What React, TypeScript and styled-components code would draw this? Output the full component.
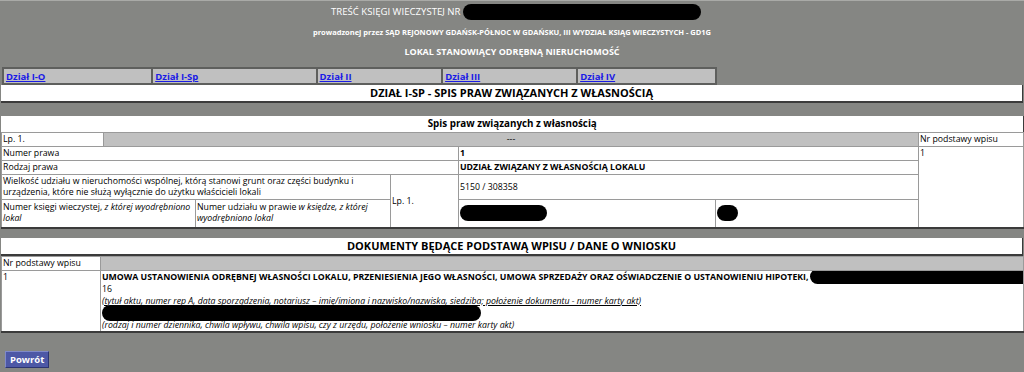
import React from 'react'
import styled, { createGlobalStyle } from 'styled-components'

const GlobalStyle = createGlobalStyle`
    html, body {
        margin: 0;
        padding: 0;
        background: #858683;
        font-family: "Open Sans", "Noto Sans", sans-serif;
    }
    body {
        border-top: 1px solid #a9aaa7;
    }
`

const Page = styled.div`
    width: 1024px;
    height: 371px;
    overflow: hidden;
    color: #000;
`

const Header = styled.div`
    padding-top: 1px;
    text-align: center;
    color: #fff;
`

const HeaderLine = styled.div<{ size: number, bold?: boolean, shift?: number }>`
    height: 20px;
    line-height: 16px;
    padding-left: ${({ shift }) => shift || 0}px;
    font-size: ${({ size }) => size}px;
    font-weight: ${({ bold }) => (bold ? 700 : 400)};
    display: flex;
    justify-content: center;
    align-items: center;
`

const Redacted = styled.span<{ w: number, h?: number }>`
    display: inline-block;
    width: ${({ w }) => w}px;
    height: ${({ h }) => h || 16}px;
    border-radius: 8px;
    background: #000;
    vertical-align: middle;
`

const InlineRedacted = styled(Redacted)`
    margin: -3px 0 -2px 1px;
`

const NavTable = styled.table`
    margin: 5px 0 0 2px;
    width: 715px;
    border-collapse: collapse;
    border: 2px solid #5e5f5d;
    td {
        background: #c0c0c0;
        border: 2px solid #5e5f5d;
        height: 14px;
        padding: 0 2px;
        font-size: 9.5px;
        font-weight: 700;
    }
    a {
        color: #1a1ae6;
        text-decoration: underline;
    }
`

const SectionTitle = styled.div<{ top: number }>`
    margin: ${({ top }) => top}px 1px 0 1px;
    height: 16px;
    line-height: 16px;
    background: #fff;
    border-bottom: 2px solid #3b3b3b;
    border-right: 1px solid #3b3b3b;
    text-align: center;
    font-size: 11px;
    font-weight: 700;
`

const DataTable = styled.table<{ top: number }>`
    margin: ${({ top }) => top}px 1px 0 1px;
    width: 1022px;
    border-collapse: collapse;
    table-layout: fixed;
    background: #fff;
    border-bottom: 2px solid #3b3b3b;
    border-right: 1px solid #3b3b3b;
    font-size: 8.75px;
`

const Cell = styled.td<{ bold?: boolean, grey?: boolean, center?: boolean, h?: number }>`
    box-sizing: border-box;
    border: 1px solid #9a9a9a;
    padding: 0 1px;
    height: ${({ h }) => h || 14}px;
    line-height: 12px;
    vertical-align: ${({ h }) => (h && h > 20 ? 'middle' : 'top')};
    font-weight: ${({ bold }) => (bold ? 700 : 400)};
    background: ${({ grey }) => (grey ? '#c0c0c0' : '#fff')};
    text-align: ${({ center }) => (center ? 'center' : 'left')};
    overflow: hidden;
`

const TopCell = styled(Cell)`
    vertical-align: top;
`

const WrapText = styled.div`
    line-height: 11.5px;
`

const TableTitle = styled.td`
    box-sizing: border-box;
    height: 15px;
    line-height: 14px;
    text-align: center;
    font-size: 9.8px;
    font-weight: 700;
    border-bottom: 1px solid #9a9a9a;
`

const Note = styled.div<{ underline?: boolean }>`
    font-style: italic;
    text-decoration: ${({ underline }) => (underline ? 'underline' : 'none')};
    line-height: 12px;
    height: 12px;
`

const Line = styled.div<{ bold?: boolean }>`
    font-weight: ${({ bold }) => (bold ? 700 : 400)};
    line-height: 12px;
    height: 12px;
    white-space: nowrap;
`

const PillLine = styled.div`
    height: 12px;
    display: flex;
    align-items: center;
`

const ButtonRow = styled.div`
    padding: 13px 0 0 5px;
`

const BackButton = styled.button`
    height: 17px;
    padding: 0 4px;
    background: #4d58a6;
    color: #fff;
    font-family: "Open Sans", sans-serif;
    font-size: 9.5px;
    font-weight: 700;
    line-height: 14px;
    border: 1px solid;
    border-color: #7f89c9 #2c3470 #2c3470 #7f89c9;
    cursor: pointer;
`

const tabs = [
    { label: 'Dział I-O', w: 150 },
    { label: 'Dział I-Sp', w: 166 },
    { label: 'Dział II', w: 125 },
    { label: 'Dział III', w: 135 },
    { label: 'Dział IV', w: 139 },
]

export default function App() {
    return (
        <Page>
            <GlobalStyle />
            <Header>
                <HeaderLine size={9.6} shift={8}>
                    TREŚĆ KSIĘGI WIECZYSTEJ NR&nbsp;<Redacted w={238} />
                </HeaderLine>
                <HeaderLine size={7.5} bold>
                    prowadzonej przez SĄD REJONOWY GDAŃSK-PÓŁNOC W GDAŃSKU, III WYDZIAŁ KSIĄG WIECZYSTYCH - GD1G
                </HeaderLine>
                <HeaderLine size={9} bold>
                    LOKAL STANOWIĄCY ODRĘBNĄ NIERUCHOMOŚĆ
                </HeaderLine>
            </Header>

            <NavTable>
                <tbody>
                    <tr>
                        {tabs.map(t => (
                            <td key={t.label} style={{ width: t.w }}>
                                <a href="#">{t.label}</a>
                            </td>
                        ))}
                    </tr>
                </tbody>
            </NavTable>

            <SectionTitle top={0}>DZIAŁ I-SP - SPIS PRAW ZWIĄZANYCH Z WŁASNOŚCIĄ</SectionTitle>

            <DataTable top={13}>
                <colgroup>
                    <col style={{ width: 102 }} />
                    <col style={{ width: 92 }} />
                    <col style={{ width: 195 }} />
                    <col style={{ width: 68 }} />
                    <col style={{ width: 257 }} />
                    <col style={{ width: 203 }} />
                    <col style={{ width: 105 }} />
                </colgroup>
                <tbody>
                    <tr>
                        <TableTitle colSpan={7}>Spis praw związanych z własnością</TableTitle>
                    </tr>
                    <tr>
                        <Cell>Lp. 1.</Cell>
                        <Cell colSpan={5} grey center>---</Cell>
                        <Cell>Nr podstawy wpisu</Cell>
                    </tr>
                    <tr>
                        <Cell colSpan={4}>Numer prawa</Cell>
                        <Cell colSpan={2} bold>1</Cell>
                        <TopCell rowSpan={4}>1</TopCell>
                    </tr>
                    <tr>
                        <Cell colSpan={4}>Rodzaj prawa</Cell>
                        <Cell colSpan={2} bold>UDZIAŁ ZWIĄZANY Z WŁASNOŚCIĄ LOKALU</Cell>
                    </tr>
                    <tr>
                        <Cell colSpan={3} h={25}>
                            <WrapText>
                                Wielkość udziału w nieruchomości wspólnej, którą stanowi grunt oraz części budynku i
                                urządzenia, które nie służą wyłącznie do użytku właścicieli lokali
                            </WrapText>
                        </Cell>
                        <Cell rowSpan={2} h={25}>Lp. 1.</Cell>
                        <Cell colSpan={2} h={25}>5150 / 308358</Cell>
                    </tr>
                    <tr>
                        <Cell colSpan={2} h={28}>
                            <WrapText>
                                Numer księgi wieczystej, <i>z której wyodrębniono lokal</i>
                            </WrapText>
                        </Cell>
                        <Cell h={28}>
                            <WrapText>
                                Numer udziału w prawie <i>w księdze, z której wyodrębniono lokal</i>
                            </WrapText>
                        </Cell>
                        <Cell h={28}><Redacted w={87} /></Cell>
                        <Cell h={28}><Redacted w={21} /></Cell>
                    </tr>
                </tbody>
            </DataTable>

            <SectionTitle top={9}>DOKUMENTY BĘDĄCE PODSTAWĄ WPISU / DANE O WNIOSKU</SectionTitle>

            <DataTable top={0}>
                <colgroup>
                    <col style={{ width: 99 }} />
                    <col style={{ width: 923 }} />
                </colgroup>
                <tbody>
                    <tr>
                        <Cell>Nr podstawy wpisu</Cell>
                        <Cell grey />
                    </tr>
                    <tr>
                        <Cell>1</Cell>
                        <Cell>
                            <Line bold>
                                UMOWA USTANOWIENIA ODRĘBNEJ WŁASNOŚCI LOKALU, PRZENIESIENIA JEGO WŁASNOŚCI, UMOWA SPRZEDAŻY ORAZ OŚWIADCZENIE O USTANOWIENIU HIPOTEKI,
                                <InlineRedacted w={224} h={15} />
                            </Line>
                            <Line>16</Line>
                            <Note underline>
                                (tytuł aktu, numer rep A, data sporządzenia, notariusz – imię/imiona i nazwisko/nazwiska, siedziba; położenie dokumentu - numer karty akt)
                            </Note>
                            <PillLine>
                                <Redacted w={379} />
                            </PillLine>
                            <Note>
                                (rodzaj i numer dziennika, chwila wpływu, chwila wpisu, czy z urzędu, położenie wniosku – numer karty akt)
                            </Note>
                        </Cell>
                    </tr>
                </tbody>
            </DataTable>

            <ButtonRow>
                <BackButton>Powrót</BackButton>
            </ButtonRow>
        </Page>
    )
}
